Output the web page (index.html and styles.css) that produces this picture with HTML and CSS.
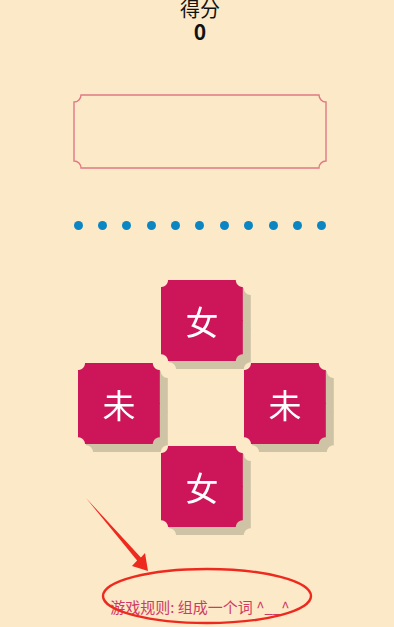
FILE: index.html
```html
<!DOCTYPE html>
<html lang="zh-CN">
<head>
  <meta charset="UTF-8">
  <title>组词游戏</title>
  <link rel="stylesheet" href="styles.css">
</head>
<body>

<div class="game">
  <div class="score">
    <div class="score-label">得分</div>
    <div class="score-value">0</div>
  </div>

  <!-- 答案框 -->
  <div class="answer-box">
    <svg width="254" height="75" viewBox="0 0 254 75">
      <path transform="translate(1 1)" d="M7 0 H245 A7 7 0 0 0 252 7 V66 A7 7 0 0 0 245 73 H7 A7 7 0 0 0 0 66 V7 A7 7 0 0 0 7 0 Z" fill="none" stroke="#E07886" stroke-width="1.4"/>
    </svg>
  </div>

  <div class="dots">
    <span></span><span></span><span></span><span></span><span></span><span></span>
    <span></span><span></span><span></span><span></span><span></span>
  </div>

  <!-- 字块 -->
  <div class="board">
    <div class="slot pos-top"><div class="tile">女</div></div>
    <div class="slot pos-left"><div class="tile">未</div></div>
    <div class="slot pos-right"><div class="tile">未</div></div>
    <div class="slot pos-bottom"><div class="tile">女</div></div>
  </div>

  <div class="rule">游戏规则: 组成一个词 ^__^</div>
</div>

<!-- 标注 -->
<svg class="annotation" width="394" height="627" viewBox="0 0 394 627">
  <polygon points="86,498 140.9,557.4 145,553 148,571 132,566 137.1,560.6" fill="#EE2A1E"/>
  <ellipse cx="207" cy="596" rx="104" ry="27" fill="none" stroke="#EE2A1E" stroke-width="2.4"/>
</svg>

</body>
</html>
```

FILE: styles.css
```css
:root {
  --color-bg: #FCE9C8;
  --color-tile: #CD1559;
  --color-shadow: #CFC3A5;
  --color-dot: #0B86C3;
  --color-rule: #CF3A63;
}

body {
  margin: 0;
  background-color: var(--color-bg);
  font-family: "Noto Sans CJK SC", "Noto Sans", sans-serif;
  color: #111;
  position: relative;
  height: 627px;
  overflow: hidden;
}

.game {
  display: flex;
  flex-direction: column;
  align-items: center;
  padding-left: 6px;
}

.score {
  text-align: center;
  margin-top: -2px;
}

.score-label {
  font-size: 20px;
  line-height: 21px;
}

.score-value {
  font-size: 21px;
  font-weight: bold;
  line-height: 24px;
}

.answer-box {
  margin-top: 51px;
  height: 75px;
}

.answer-box svg {
  display: block;
}

.dots {
  width: 253px;
  display: flex;
  justify-content: space-between;
  margin-top: 52px;
}

.dots span {
  width: 9px;
  height: 9px;
  border-radius: 50%;
  background-color: var(--color-dot);
}

.board {
  display: grid;
  grid-template-columns: repeat(3, 83px);
  grid-template-rows: repeat(3, 83px);
  margin-top: 50px;
  margin-left: 5px;
}

.pos-top { grid-area: 1 / 2; }
.pos-left { grid-area: 2 / 1; }
.pos-right { grid-area: 2 / 3; }
.pos-bottom { grid-area: 3 / 2; }

.slot {
  filter: drop-shadow(8px 8px 0 var(--color-shadow));
}

.tile {
  width: 82px;
  height: 81px;
  background-color: var(--color-tile);
  color: white;
  font-size: 33px;
  display: flex;
  align-items: center;
  justify-content: center;
  -webkit-mask:
    radial-gradient(circle at 0 0, transparent 6.5px, #000 7.5px) 0 0 / 51% 51% no-repeat,
    radial-gradient(circle at 100% 0, transparent 6.5px, #000 7.5px) 100% 0 / 51% 51% no-repeat,
    radial-gradient(circle at 0 100%, transparent 6.5px, #000 7.5px) 0 100% / 51% 51% no-repeat,
    radial-gradient(circle at 100% 100%, transparent 6.5px, #000 7.5px) 100% 100% / 51% 51% no-repeat;
  mask:
    radial-gradient(circle at 0 0, transparent 6.5px, #000 7.5px) 0 0 / 51% 51% no-repeat,
    radial-gradient(circle at 100% 0, transparent 6.5px, #000 7.5px) 100% 0 / 51% 51% no-repeat,
    radial-gradient(circle at 0 100%, transparent 6.5px, #000 7.5px) 0 100% / 51% 51% no-repeat,
    radial-gradient(circle at 100% 100%, transparent 6.5px, #000 7.5px) 100% 100% / 51% 51% no-repeat;
}

.rule {
  margin-top: 68px;
  font-size: 15px;
  line-height: 20px;
  color: var(--color-rule);
}

.annotation {
  position: absolute;
  top: 0;
  left: 0;
  pointer-events: none;
}
```
